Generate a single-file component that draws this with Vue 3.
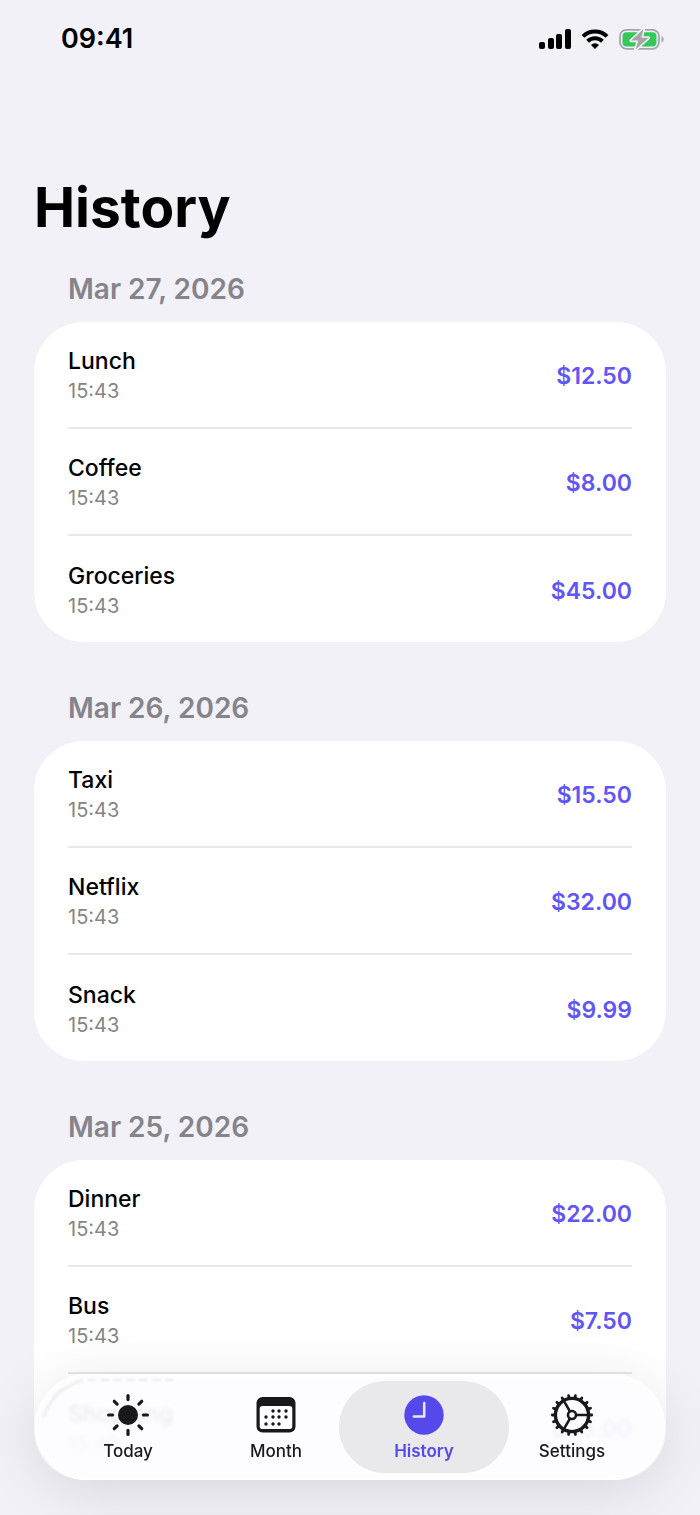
<script setup>
import { ref } from 'vue'

const sections = [
  {
    date: 'Mar 27, 2026',
    items: [
      { name: 'Lunch', time: '15:43', amount: '$12.50' },
      { name: 'Coffee', time: '15:43', amount: '$8.00' },
      { name: 'Groceries', time: '15:43', amount: '$45.00' },
    ],
  },
  {
    date: 'Mar 26, 2026',
    items: [
      { name: 'Taxi', time: '15:43', amount: '$15.50' },
      { name: 'Netflix', time: '15:43', amount: '$32.00' },
      { name: 'Snack', time: '15:43', amount: '$9.99' },
    ],
  },
  {
    date: 'Mar 25, 2026',
    items: [
      { name: 'Dinner', time: '15:43', amount: '$22.00' },
      { name: 'Bus', time: '15:43', amount: '$7.50' },
      { name: 'Shopping', time: '15:43', amount: '$35.00' },
    ],
  },
]

const tabs = ['Today', 'Month', 'History', 'Settings']
const active = ref('History')

const rays = Array.from({ length: 8 }, (_, i) => i * 45)
const teeth = Array.from({ length: 18 }, (_, i) => i * 20)
const dots = [
  [19, 18], [25, 18], [32, 18],
  [12, 24], [19, 24], [25, 24], [32, 24],
  [12, 31], [19, 31], [25, 31],
]
</script>

<template>
  <div class="screen">
    <header class="status">
      <time class="clock">09:41</time>
      <div class="indicators">
        <svg class="signal" viewBox="0 0 32 20" aria-label="Signal">
          <rect x="0" y="13" width="6" height="7" rx="2" />
          <rect x="9" y="9" width="6" height="11" rx="2" />
          <rect x="17" y="5" width="6" height="15" rx="2" />
          <rect x="26" y="0" width="6" height="20" rx="2" />
        </svg>
        <svg class="wifi" viewBox="0 0 28 20" aria-label="Wi-Fi">
          <path d="M2 7.4a17.3 17.3 0 0 1 24 0" class="arc" />
          <path d="M6.6 12.3a10.7 10.7 0 0 1 14.8 0" class="arc" />
          <path d="M14 20l-4-4.1a5.8 5.8 0 0 1 8 0z" />
        </svg>
        <svg class="battery" viewBox="0 0 46 22" aria-label="Battery charging">
          <rect x="1" y="1.8" width="39" height="19" rx="6.5" fill="none" stroke="#a6a6aa" stroke-width="1.8" />
          <path d="M42.5 8v6.5c1.3-.5 2.1-1.8 2.1-3.2S43.8 8.5 42.5 8z" fill="#a6a6aa" />
          <rect x="3.5" y="4.2" width="34" height="14.2" rx="4" fill="#34c759" />
          <path d="M24.500 1L12 12.600h7.200L16.600 21.500 29.600 9.800h-7.300z" fill="#a6a6aa" stroke="#f2f1f7" stroke-width="3.200" stroke-linejoin="round" paint-order="stroke" />
        </svg>
      </div>
    </header>

    <main class="content">
      <h1>History</h1>
      <section v-for="section in sections" :key="section.date">
        <h2>{{ section.date }}</h2>
        <ul class="card">
          <li v-for="item in section.items" :key="item.name" class="row">
            <div>
              <div class="name">{{ item.name }}</div>
              <div class="time">{{ item.time }}</div>
            </div>
            <div class="amount">{{ item.amount }}</div>
          </li>
        </ul>
      </section>
    </main>

    <nav class="tabbar">
      <svg class="glint" viewBox="0 0 150 60" aria-hidden="true">
        <path d="M8 44C14 26 28 12 48 6M18 24c5-6 10-9 16-12" />
        <path d="M52 6h86" stroke-dasharray="9 4" />
      </svg>
      <button
        v-for="tab in tabs"
        :key="tab"
        type="button"
        class="tab"
        :class="{ active: tab === active }"
        @click="active = tab"
      >
        <svg v-if="tab === 'Today'" viewBox="0 0 44 44" aria-hidden="true">
          <circle cx="22" cy="22" r="10" fill="currentColor" />
          <path
            v-for="angle in rays"
            :key="angle"
            d="M22 2.600v4"
            :transform="`rotate(${angle} 22 22)`"
            stroke="currentColor"
            stroke-width="3.200"
            stroke-linecap="round"
          />
        </svg>
        <svg v-else-if="tab === 'Month'" viewBox="0 0 44 44" aria-hidden="true">
          <path
            d="M8.500 4h27a6 6 0 0 1 6 6v23.500a6 6 0 0 1-6 6h-27a6 6 0 0 1-6-6V10a6 6 0 0 1 6-6zM8.500 13a2.800 2.800 0 0 0-2.800 2.800v17.400a2.800 2.800 0 0 0 2.800 2.800h27a2.800 2.800 0 0 0 2.800-2.800V15.800a2.800 2.800 0 0 0-2.800-2.800z"
            fill="currentColor"
            fill-rule="evenodd"
          />
          <circle v-for="[x, y] in dots" :key="`${x}-${y}`" :cx="x" :cy="y" r="1.700" fill="currentColor" />
        </svg>
        <svg v-else-if="tab === 'History'" viewBox="0 0 44 44" aria-hidden="true">
          <circle cx="22" cy="22" r="19.700" fill="currentColor" />
          <path d="M22.200 10v13.500h-10.400" fill="none" stroke="#e9e9ec" stroke-width="2.500" stroke-linecap="round" stroke-linejoin="round" />
        </svg>
        <svg v-else viewBox="0 0 44 44" aria-hidden="true">
          <g fill="none" stroke="currentColor">
            <circle cx="22" cy="22" r="16.600" stroke-width="3.400" />
            <circle cx="22" cy="22" r="4" stroke-width="2.600" />
            <path d="M26 22h12M20 18.500l-6.200-10.700M20 25.500l-6.200 10.700" stroke-width="2.500" />
            <path
              v-for="angle in teeth"
              :key="angle"
              d="M39 22h2.700"
              :transform="`rotate(${angle} 22 22)`"
              stroke-width="2.800"
              stroke-linecap="round"
            />
          </g>
        </svg>
        <span>{{ tab }}</span>
      </button>
    </nav>
  </div>
</template>

<style>
body {
  margin: 0;
  background: #f2f1f7;
}
</style>

<style scoped>
.screen {
  position: relative;
  display: flex;
  flex-direction: column;
  height: 100vh;
  overflow: hidden;
  background: #f2f1f7;
  color: #000;
  font-family: Inter, "Liberation Sans", sans-serif;
}

.status {
  display: flex;
  align-items: center;
  justify-content: space-between;
  height: 77px;
  padding: 0 35px 0 61px;
}

.clock {
  font-size: 27px;
  font-weight: 600;
  line-height: 32px;
}

.indicators {
  display: flex;
  align-items: center;
  gap: 10px;
}

.signal {
  width: 32px;
  height: 20px;
}

.wifi {
  width: 28px;
  height: 20px;
}

.arc {
  fill: none;
  stroke: #000;
  stroke-width: 4;
}

.battery {
  width: 46px;
  height: 22px;
}

.content {
  flex: 1;
  min-height: 0;
  overflow: hidden;
  padding: 95px 34px 0;
}

h1 {
  margin: 0 0 29px;
  font-size: 55px;
  font-weight: 700;
  line-height: 70px;
}

section {
  margin-bottom: 48px;
}

h2 {
  margin: 0;
  padding: 0 34px 15px;
  color: #85848a;
  font-size: 28px;
  font-weight: 600;
  line-height: 36px;
}

.card {
  margin: 0;
  padding: 0 34px;
  border-radius: 50px;
  background: #fff;
  list-style: none;
}

.row {
  display: flex;
  align-items: center;
  justify-content: space-between;
  box-sizing: border-box;
  height: 107px;
  padding-top: 3px;
  border-bottom: 2px solid #e8e8e8;
}

.row:last-child {
  height: 106px;
  border-bottom: 0;
}

.name {
  font-size: 23px;
  font-weight: 500;
  line-height: 30px;
}

.time {
  color: #858585;
  font-size: 20px;
  line-height: 30px;
}

.amount {
  color: #6155f5;
  font-size: 23px;
  font-weight: 600;
  line-height: 30px;
}

.tabbar {
  position: absolute;
  right: 35px;
  bottom: 35px;
  left: 35px;
  display: flex;
  padding: 7px 19px;
  border-radius: 53px;
  background: rgba(253, 253, 255, 0.93);
  backdrop-filter: blur(2px);
  box-shadow:
    inset 0 0 2px 2px #fff,
    0 10px 60px rgba(0, 0, 0, 0.11);
}

.glint {
  position: absolute;
  top: 0;
  left: 0;
  width: 150px;
  height: 60px;
  fill: none;
  stroke: #efeff1;
  stroke-width: 3;
  filter: blur(1px);
}

.tab {
  position: relative;
  display: flex;
  flex: 1;
  flex-direction: column;
  align-items: center;
  gap: 4px;
  margin: 0 -11px;
  padding: 12px 0;
  border: 0;
  border-radius: 46px;
  background: none;
  color: #19191b;
  font-family: inherit;
  font-size: 17px;
  font-weight: 500;
  line-height: 20px;
  cursor: pointer;
}

.tab svg {
  width: 44px;
  height: 44px;
}

.tab.active {
  background: #e9e9eb;
  color: #5549ec;
  font-weight: 600;
}
</style>
